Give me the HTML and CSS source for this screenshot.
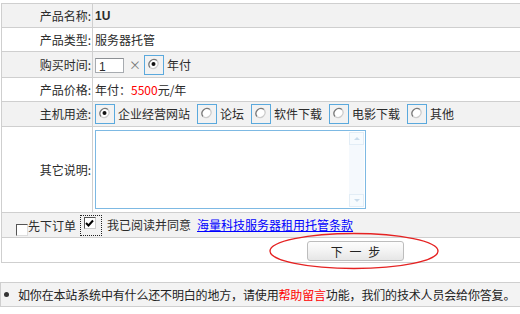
FILE: index.html
```html
<!DOCTYPE html>
<html>
<head>
<meta charset="utf-8">
<link rel="stylesheet" href="styles.css">
</head>
<body>
<div class="form">
  <div class="row alt h24"><div class="lbl">产品名称:</div><div class="val"><b class="bold">1U</b></div></div>
  <div class="row h24"><div class="lbl">产品类型:</div><div class="val">服务器托管</div></div>
  <div class="row alt h26"><div class="lbl">购买时间:</div><div class="val">
    <span class="num">1</span><span class="times">×</span>
    <span class="rb"><svg width="18" height="18" viewBox="0 0 18 18"><circle cx="8.5" cy="8" r="5" fill="#fff"/><path d="M5 11.5 A5 5 0 0 1 12 4.5" fill="none" stroke="#777" stroke-width="1.3"/><path d="M12 4.5 A5 5 0 0 1 5 11.5" fill="none" stroke="#ccc" stroke-width="1.3"/><circle cx="8.5" cy="8" r="2" fill="#111"/></svg></span>
    <span class="rt">年付</span>
  </div></div>
  <div class="row h24"><div class="lbl">产品价格:</div><div class="val">年付：<span class="red">5500</span>元/年</div></div>
  <div class="row alt h25"><div class="lbl">主机用途:</div><div class="val">
    <span class="rb"><svg width="18" height="18" viewBox="0 0 18 18"><circle cx="8.5" cy="8" r="5" fill="#fff"/><path d="M5 11.5 A5 5 0 0 1 12 4.5" fill="none" stroke="#777" stroke-width="1.3"/><path d="M12 4.5 A5 5 0 0 1 5 11.5" fill="none" stroke="#ccc" stroke-width="1.3"/><circle cx="8.5" cy="8" r="2" fill="#111"/></svg></span><span class="rt">企业经营网站</span>
    <span class="rb"><svg width="18" height="18" viewBox="0 0 18 18"><circle cx="8.5" cy="8" r="5" fill="#fff"/><path d="M5 11.5 A5 5 0 0 1 12 4.5" fill="none" stroke="#777" stroke-width="1.3"/><path d="M12 4.5 A5 5 0 0 1 5 11.5" fill="none" stroke="#ccc" stroke-width="1.3"/></svg></span><span class="rt">论坛</span>
    <span class="rb"><svg width="18" height="18" viewBox="0 0 18 18"><circle cx="8.5" cy="8" r="5" fill="#fff"/><path d="M5 11.5 A5 5 0 0 1 12 4.5" fill="none" stroke="#777" stroke-width="1.3"/><path d="M12 4.5 A5 5 0 0 1 5 11.5" fill="none" stroke="#ccc" stroke-width="1.3"/></svg></span><span class="rt">软件下载</span>
    <span class="rb"><svg width="18" height="18" viewBox="0 0 18 18"><circle cx="8.5" cy="8" r="5" fill="#fff"/><path d="M5 11.5 A5 5 0 0 1 12 4.5" fill="none" stroke="#777" stroke-width="1.3"/><path d="M12 4.5 A5 5 0 0 1 5 11.5" fill="none" stroke="#ccc" stroke-width="1.3"/></svg></span><span class="rt">电影下载</span>
    <span class="rb"><svg width="18" height="18" viewBox="0 0 18 18"><circle cx="8.5" cy="8" r="5" fill="#fff"/><path d="M5 11.5 A5 5 0 0 1 12 4.5" fill="none" stroke="#777" stroke-width="1.3"/><path d="M12 4.5 A5 5 0 0 1 5 11.5" fill="none" stroke="#ccc" stroke-width="1.3"/></svg></span><span class="rt">其他</span>
  </div></div>
  <div class="row h86"><div class="lbl">其它说明:</div><div class="val top">
    <div class="ta"><div class="sb"><span class="sbtn"><svg width="8" height="5" viewBox="0 0 8 5"><path d="M1 4 L4 1 L7 4Z" fill="#c9dcec"/></svg></span><span class="sbtn"><svg width="8" height="5" viewBox="0 0 8 5"><path d="M1 1 L4 4 L7 1Z" fill="#c9dcec"/></svg></span></div></div>
  </div></div>
  <div class="row alt h25 full"><div class="agree">
    <span class="cb"></span><span class="t1">先下订单</span>
    <span class="focus"><span class="cb checked"><svg width="9" height="9" viewBox="0 0 9 9"><path d="M1 4 L3.5 6.5 L8 1.5" fill="none" stroke="#000" stroke-width="2"/></svg></span></span>
    <span class="t2">我已阅读并同意</span><a class="link">海量科技服务器租用托管条款</a>
  </div></div>
  <div class="row h25 full"><div class="btnwrap"><span class="btn">下 一 步</span>
    <svg class="ring" width="172" height="38" viewBox="0 0 172 38"><ellipse cx="86" cy="19" rx="84" ry="17.5" fill="none" stroke="#e52222" stroke-width="1.4"/></svg>
  </div></div>
</div>
<div class="notice"><span class="dot"></span><span class="ntext">如你在本站系统中有什么还不明白的地方，请使用<span class="red">帮助留言</span>功能，我们的技术人员会给你答复。</span></div>
</body>
</html>
```

FILE: styles.css
```css
html, body { margin: 0; padding: 0; background: #fff; }
body {
  font-family: "Noto Sans CJK SC", "Liberation Sans", sans-serif;
  font-size: 12px;
  color: #2b2b2b;
  width: 520px;
  overflow: hidden;
}
.form {
  margin: 3px 0 0 1px;
  border-top: 1px solid #cfcfcf;
  border-left: 1px solid #cfcfcf;
  width: 530px;
}
.row {
  display: grid;
  grid-template-columns: 91px 1fr;
  border-bottom: 1px solid #cfcfcf;
  box-sizing: border-box;
}
.row.full { display: flex; }
.alt { background: #f2f2f2; }
.h24 { height: 24px; }
.h25 { height: 25px; }
.h26 { height: 26px; }
.h86 { height: 86px; }
.lbl {
  border-right: 1px solid #cfcfcf;
  display: flex;
  align-items: center;
  justify-content: flex-end;
  padding-right: 1px;
  line-height: 14px;
}
.val {
  display: flex;
  align-items: center;
  padding-left: 2px;
  line-height: 14px;
  white-space: nowrap;
}
.val.top { align-items: flex-start; padding-top: 3px; }
.bold { font-family: "Liberation Sans", sans-serif; font-weight: bold; font-size: 12px; }
.red { color: #f00; }
.num {
  width: 29px; height: 15px; box-sizing: border-box;
  border: 1px solid #a7abb0; border-top-color: #8d9094;
  background: #fff;
  font-family: "Liberation Sans", sans-serif; font-size: 12px;
  line-height: 12px; padding: 2px 0 0 3px; margin-top: 2px;
}
.times { color: #777; margin: 0 3px 0 5px; font-size: 12px; }
.rb {
  display: inline-flex;
  flex-shrink: 0;
  width: 20px; height: 20px; box-sizing: border-box;
  border: 1px solid #5aa9dd;
  align-items: center; justify-content: center;
  margin-right: 3px;
}
.rb + .rt + .rb { margin-left: 7px; }
.rt { margin-right: 0; }
.ta {
  width: 271px; height: 79px; box-sizing: border-box;
  border: 1px solid #7db9e3;
  background: #fff;
  margin-left: 0;
  display: flex; justify-content: flex-end;
}
.sb {
  width: 15px; margin: 1px 1px 1px 0;
  background: #f5f9fd;
  display: flex; flex-direction: column; justify-content: space-between;
}
.sbtn {
  height: 13px; border: 1px solid #e2edf6; box-sizing: border-box;
  display: flex; align-items: center; justify-content: center;
  background: #f7fbfe;
}
.agree {
  display: flex; align-items: center;
  padding-left: 14px;
  white-space: nowrap;
  line-height: 14px;
}
.cb {
  flex-shrink: 0;
  width: 12px; height: 12px; box-sizing: border-box;
  border: 1px solid #fff;
  border-top-color: #555; border-left-color: #555;
  border-right-color: #ddd; border-bottom-color: #ddd;
  background: #fff;
  display: inline-flex; align-items: center; justify-content: center;
  margin-top: 9px;
}
.cb.checked { margin-top: 0; border-right-color: #ccc; border-bottom-color: #ccc; }
.t1 { margin-left: 0; margin-top: 2px; }
.focus {
  flex-shrink: 0;
  display: inline-flex; align-items: center; justify-content: center;
  width: 22px; height: 21px; box-sizing: border-box;
  border: 1px dotted #222;
  margin-left: 4px; margin-right: 5px;
  padding-bottom: 4px; padding-right: 3px;
}
.t2 { margin-right: 6px; }
.link { color: #00f; text-decoration: underline; }
.btnwrap {
  position: relative;
  padding-left: 305px;
  display: flex; align-items: center;
}
.btn {
  width: 97px; height: 20px; box-sizing: border-box;
  border: 1px solid #bdbdbd; border-radius: 3px;
  background: linear-gradient(#fdfdfd, #f3f3f3 50%, #e6e6e6);
  display: flex; align-items: center; justify-content: center;
  color: #222; letter-spacing: 2px; padding-left: 2px;
  margin-top: 2px;
}
.ring { position: absolute; left: 266px; top: -6px; }
.notice {
  margin-top: 19px;
  width: 520px;
  height: 25px; box-sizing: border-box;
  border-top: 1px solid #cfcfcf; border-bottom: 1px solid #cfcfcf;
  border-left: 1px solid #cfcfcf;
  background: #f3f3f3;
  display: flex; align-items: center;
  white-space: nowrap;
  color: #222;
  line-height: 14px;
  overflow: hidden;
}
.ntext { letter-spacing: -0.16px; }
.dot {
  flex-shrink: 0;
  width: 5px; height: 5px; border-radius: 50%; background: #333;
  margin: 0 9px 0 3px;
}
```
